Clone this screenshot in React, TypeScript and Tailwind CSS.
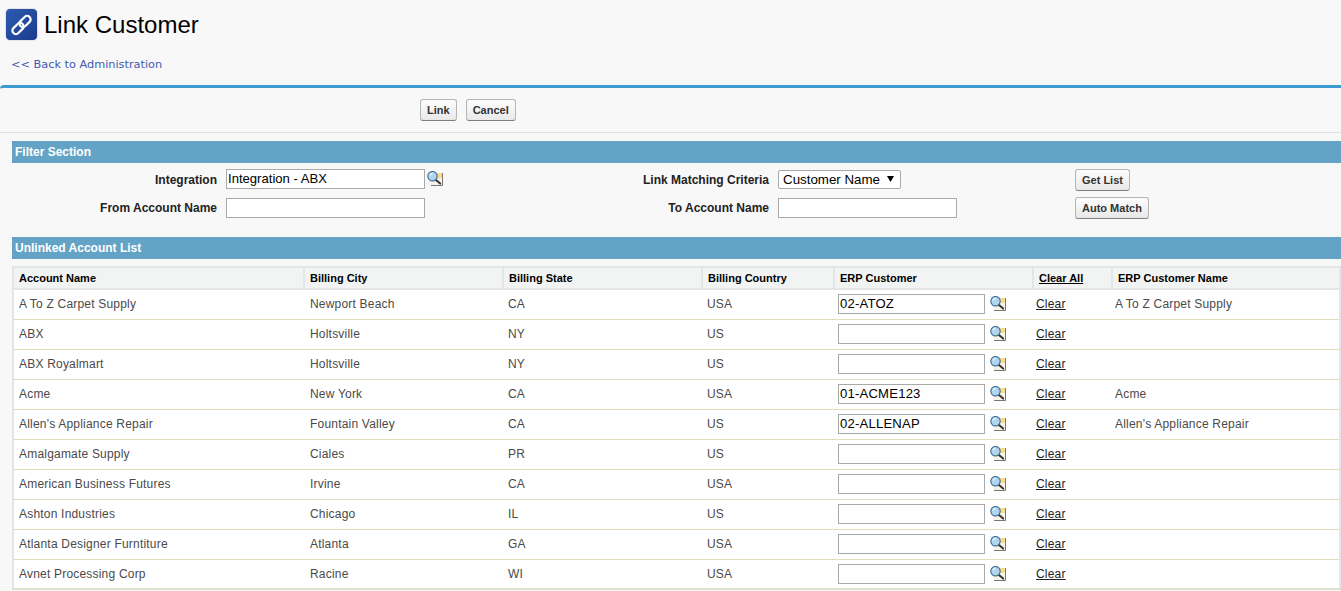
import React from "react";

function Lookup() {
  return (
    <svg width="16" height="15" viewBox="0 0 16 15" className="block shrink-0 mt-[2px]">
      <rect x="3.5" y="2" width="11" height="12" fill="#f5f3ea" />
      <rect x="8" y="2" width="7" height="5" fill="#fdd98a" />
      <path d="M15.5 2 V14.5 H4" fill="none" stroke="#777" strokeWidth="1" />
      <path d="M9 9 L13.2 12.6" stroke="#40342a" strokeWidth="2" strokeLinecap="round" />
      <circle cx="5.5" cy="5.2" r="4.7" fill="#b0d5ee" stroke="#3a6a90" strokeWidth="1.1" />
      <path d="M3 4.6 A3 3 0 0 1 5.6 2.4" fill="none" stroke="#f0f9fe" strokeWidth="1.2" />
    </svg>
  );
}

function Btn({ children }: { children: React.ReactNode }) {
  return (
    <button className="h-[22px] px-[6px] rounded-[3px] border border-[#b5b5b5] border-b-[#7f7f7f] bg-gradient-to-b from-[#fdfdfd] to-[#e8e8e8] text-[11px] font-bold text-[#333] leading-none">
      {children}
    </button>
  );
}

function TextBox({ value, w }: { value?: string; w: string }) {
  return (
    <input
      readOnly
      value={value ?? ""}
      className={`${w} h-5 border border-[#a9a9a9] bg-white px-px pb-px text-[13.1px] font-normal text-black outline-none`}
    />
  );
}

const rows = [
  ["A To Z Carpet Supply", "Newport Beach", "CA", "USA", "02-ATOZ", "A To Z Carpet Supply"],
  ["ABX", "Holtsville", "NY", "US", "", ""],
  ["ABX Royalmart", "Holtsville", "NY", "US", "", ""],
  ["Acme", "New York", "CA", "USA", "01-ACME123", "Acme"],
  ["Allen's Appliance Repair", "Fountain Valley", "CA", "US", "02-ALLENAP", "Allen's Appliance Repair"],
  ["Amalgamate Supply", "Ciales", "PR", "US", "", ""],
  ["American Business Futures", "Irvine", "CA", "USA", "", ""],
  ["Ashton Industries", "Chicago", "IL", "US", "", ""],
  ["Atlanta Designer Furntiture", "Atlanta", "GA", "USA", "", ""],
  ["Avnet Processing Corp", "Racine", "WI", "USA", "", ""],
];

const th = "h-[22px] border-l-2 border-[#e3e6e8] first:border-l-0 pl-[5px] pt-px text-left align-middle font-bold text-[11px] text-black";
const td = "h-[30px] border-b border-[#e3deb9] p-0 align-middle text-[12px] tracking-[0.2px] text-[#4a4a4a]";

export default function App() {
  return (
    <div className="w-[1341px] h-[591px] overflow-hidden bg-[#f8f8f8] font-['Liberation_Sans',Arial,sans-serif]">
      <div className="h-[85px] pt-2 pl-[5px]">
        <div className="flex items-center gap-[6px] h-[33px]">
          <div className="w-[33px] h-[33px] rounded-[5px] border border-[#e4e4e4] bg-gradient-to-br from-[#2c5cb0] to-[#1c3a8e] flex items-center justify-center">
            <svg width="31" height="31" viewBox="0 0 31 31" fill="none" stroke="#fff" strokeWidth="2.2">
              <rect x="5.5" y="16" width="13" height="7" rx="3.5" transform="rotate(-45 12 19.5)" />
              <rect x="12.5" y="9" width="13" height="7" rx="3.5" transform="rotate(-45 19 12.5)" />
            </svg>
          </div>
          <h1 className="text-[24px] leading-none text-black">Link Customer</h1>
        </div>
        <a className="block mt-[17px] ml-[6px] font-['DejaVu_Sans',sans-serif] text-[11.3px] leading-[14px] text-[#3f5bae]">
          &lt;&lt; Back to Administration
        </a>
      </div>

      <div className="h-[48px] border-t-[3px] border-[#3c9bcf] rounded-tl-[4px] border-b border-b-[#e1e1e1] pt-[11px] pl-[420px] flex items-start gap-[9px]">
        <Btn>Link</Btn>
        <Btn>Cancel</Btn>
      </div>

      <div className="pl-3 pt-2">
        <div className="h-[22px] bg-[#63a4c6] pl-[3px] text-[12px] font-bold leading-[23px] text-white">Filter Section</div>

        <div className="grid grid-cols-[214px_394px_158px_297px_1fr] text-[12px] font-bold text-[#222] mt-[6px]">
          <div className="h-[29px] pr-[9px] text-right leading-[22px]">Integration</div>
          <div className="flex items-start gap-[2px]">
            <TextBox value="Integration - ABX" w="w-[199px]" />
            <Lookup />
          </div>
          <div className="pr-[9px] text-right leading-[22px]">Link Matching Criteria</div>
          <div>
            <div className="w-[123px] h-[19px] mt-px border border-[#a9a9a9] rounded-[2px] bg-white pl-1 pr-[6px] flex items-center justify-between text-[13.33px] font-normal text-black">
              <span>Customer Name</span>
              <svg width="7" height="6" viewBox="0 0 7 6" className="block -mt-[2px]">
                <path d="M0 0 H7 L3.5 6 Z" fill="#000" />
              </svg>
            </div>
          </div>
          <div><Btn>Get List</Btn></div>

          <div className="h-[28px] pr-[9px] text-right leading-[20px]">From Account Name</div>
          <div><TextBox w="w-[199px]" /></div>
          <div className="pr-[9px] text-right leading-[20px]">To Account Name</div>
          <div><TextBox w="w-[179px]" /></div>
          <div className="-mt-px"><Btn>Auto Match</Btn></div>
        </div>

        <div className="mt-[11px] h-[22px] bg-[#63a4c6] pl-[3px] text-[12px] font-bold leading-[23px] text-white">Unlinked Account List</div>

        <table className="mt-[7px] w-[1329px] table-fixed border-collapse bg-white border-2 border-[#e3e6e8] border-b-[#e0dfce]">
          <colgroup>
            <col className="w-[291px]" />
            <col className="w-[199px]" />
            <col className="w-[199px]" />
            <col className="w-[132px]" />
            <col className="w-[199px]" />
            <col className="w-[79px]" />
            <col />
          </colgroup>
          <thead>
            <tr className="bg-[#f2f3f3] border-b-2 border-[#e3e6e8]">
              <th className={th}>Account Name</th>
              <th className={th}>Billing City</th>
              <th className={th}>Billing State</th>
              <th className={th}>Billing Country</th>
              <th className={`${th} pl-[4px]`}>ERP Customer</th>
              <th className={th}><span className="underline">Clear All</span></th>
              <th className={th}>ERP Customer Name</th>
            </tr>
          </thead>
          <tbody>
            {rows.map((r) => (
              <tr key={r[0]}>
                <td className={`${td} pl-[5px]`}>{r[0]}</td>
                <td className={`${td} pl-[6px]`}>{r[1]}</td>
                <td className={`${td} pl-[5px]`}>{r[2]}</td>
                <td className={`${td} pl-[5px]`}>{r[3]}</td>
                <td className={`${td} pl-[4px]`}>
                  <div className="flex items-start gap-[5px]">
                    <TextBox value={r[4]} w="w-[147px]" />
                    <Lookup />
                  </div>
                </td>
                <td className={`${td} pl-[3px]`}><span className="underline text-[#222]">Clear</span></td>
                <td className={`${td} pl-[3px]`}>{r[5]}</td>
              </tr>
            ))}
          </tbody>
        </table>
      </div>
    </div>
  );
}
